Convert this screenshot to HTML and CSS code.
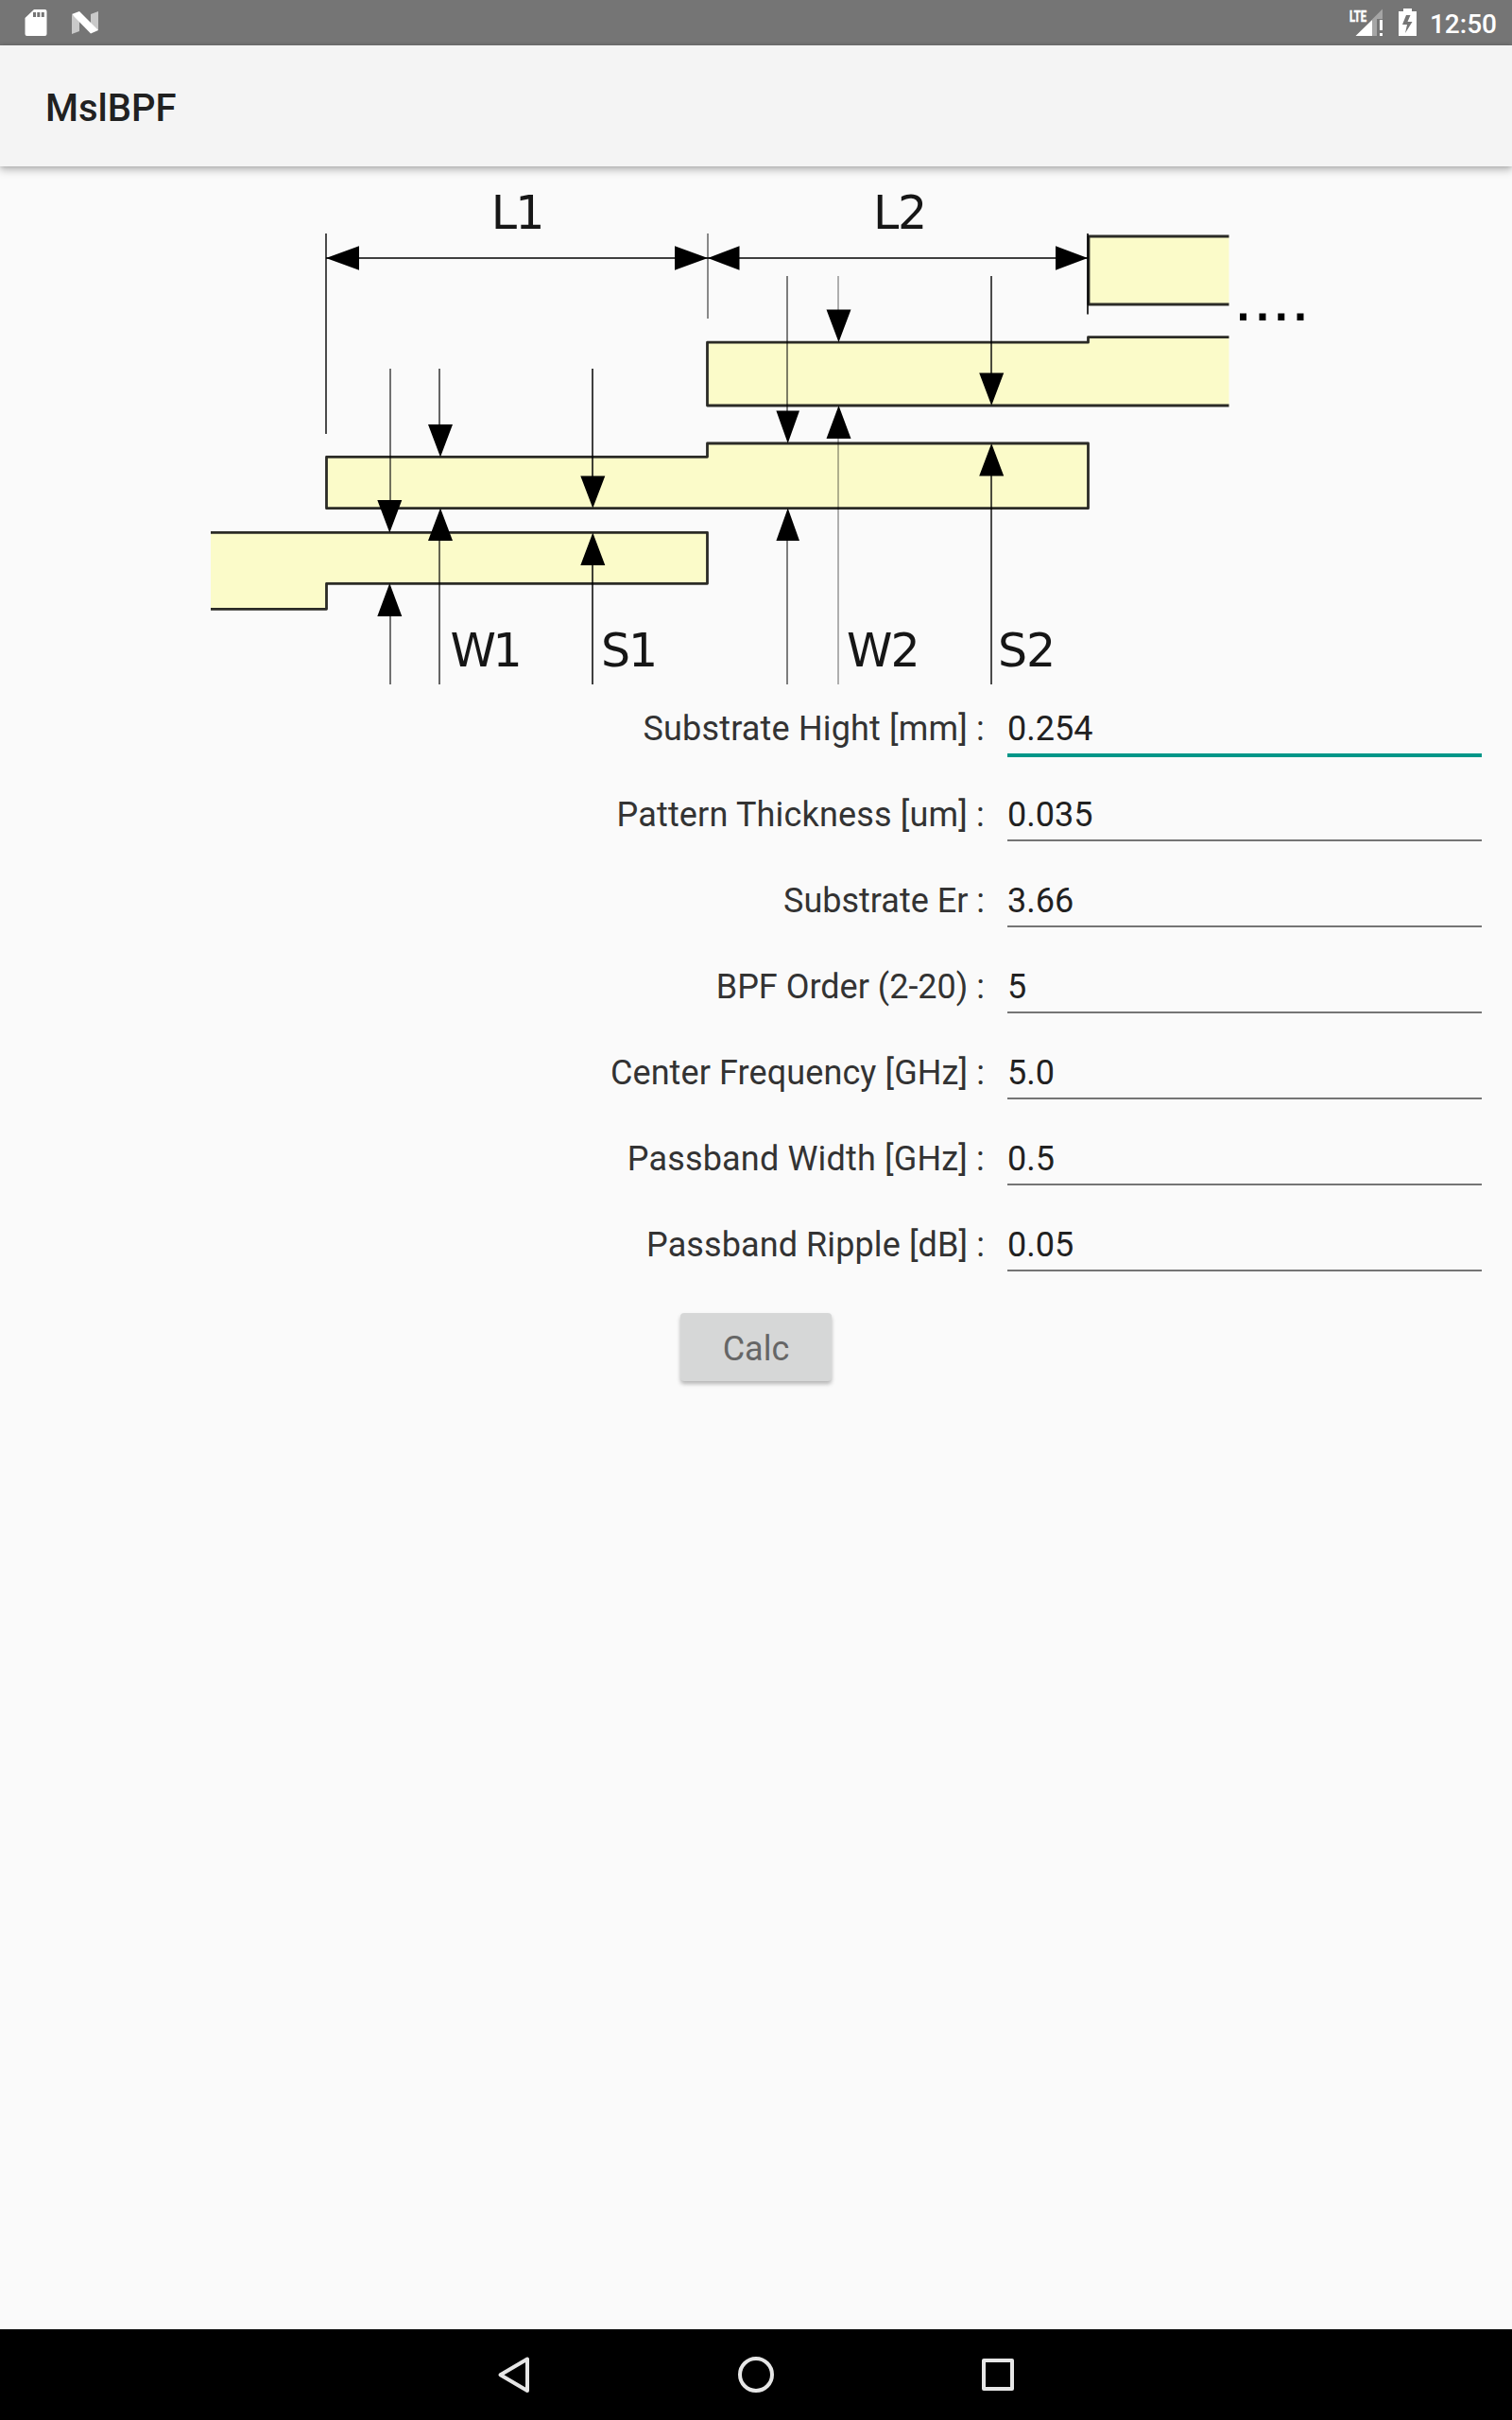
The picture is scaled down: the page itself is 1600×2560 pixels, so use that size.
FILE: index.html
```html
<!DOCTYPE html>
<html lang="en">
<head>
<meta charset="utf-8">
<title>MslBPF</title>
<link rel="stylesheet" href="styles.css">
</head>
<body>
<header class="status">
  <svg class="status-left" width="110" height="48" viewBox="0 0 110 48">
    <path fill="#fff" fill-rule="evenodd" d="M36 10h11.500a2 2 0 0 1 2 2v24a2 2 0 0 1-2 2h-19a2 2 0 0 1-2-2V19zM35 13v5h3v-5zm4.300 0v5h3v-5zm4.500 0v5h3v-5z"/>
    <path fill="#c9c9c9" d="M76 16l8 2v15l-8 3zM96 15l8-3v20l-8-2z"/>
    <path fill="#fff" d="M76 15l8-3 20 20-8 3.500z"/>
  </svg>
  <div class="status-right">
    <svg width="80" height="48" viewBox="1425 0 80 48">
      <text class="lte" x="1428" y="22.500" textLength="18" lengthAdjust="spacingAndGlyphs">LTE</text>
      <path fill="#a5a5a5" d="M1463 9.500V20h-6v18h-5V20.500z"/>
      <path fill="#fff" d="M1452 21v17h-17.500zM1460 21h3v11h-3zM1460 35h3v3h-3z"/>
      <path fill="#fff" fill-rule="evenodd" d="M1485 9h9v3h5v26h-19V12h5zM1488 16l-4 10h5l-2 9 7.500-12h-5l3-7z"/>
    </svg>
    <span class="clock">12:50</span>
  </div>
</header>
<div class="appbar"><h1>MslBPF</h1></div>
<main>
  <svg class="diagram" width="1600" height="548" viewBox="0 176 1600 548">
    <g class="fill">
      <path d="M223 563.300H748.500V617.300H345.500V644.300H223z"/>
      <path d="M345.500 483.300H748.500V469H1151.500V537.700H345.500z"/>
      <path d="M1300.500 356.700H1151.500V362.200H748.500V429H1300.500z"/>
      <path d="M1152 250H1300.500V322H1152z"/>
    </g>
    <g class="edge">
      <path d="M223 563.300H748.500V617.300H345.500V644.300H223"/>
      <path d="M345.500 483.300H748.500V469H1151.500V537.700H345.500z"/>
      <path d="M1300.500 356.700H1151.500V362.200H748.500V429H1300.500"/>
      <path d="M1300.500 250H1152V322H1300.500"/>
    </g>
    <g class="dim">
      <path opacity=".75" d="M345 273H1151"/>
      <path opacity=".7" d="M345 247V459"/>
      <path opacity=".45" d="M749 247V337"/>
      <path opacity=".8" d="M1151 247V332.500"/>
      <path opacity=".55" d="M413 390V530M413 651V724"/>
      <path opacity=".6" d="M465 390V450M465 571V724"/>
      <path opacity=".75" d="M627 390V505M627 597V724"/>
      <path opacity=".5" d="M833 292V435M833 571V724"/>
      <path opacity=".3" d="M887 292V329M887 463V724"/>
      <path opacity=".7" d="M1049 292V395M1049 503V724"/>
    </g>
    <g class="heads">
      <path d="M345 273l35-12.700v25.400zM749 273l-35-12.700v25.400zM749 273l33.500-12.700v25.400zM1151 273l-34-12.700v25.400z"/>
      <path d="M412.300 563.500l-13-34.500h26zM412.300 617l-13 35h26z"/>
      <path d="M466 483.500l-13-34.500h26zM466 537.500l-13 34.500h26z"/>
      <path d="M627.300 537.500l-13-34h26zM627.300 563.500l-13 34.500h26z"/>
      <path d="M833.700 469l-12.300-34.500h24.600zM833.700 537.500l-12.300 34.500h24.600z"/>
      <path d="M887.500 362l-13-34.500h26zM887.500 429l-13 35h26z"/>
      <path d="M1049.200 429l-13-34.500h26zM1049.200 469l-13 34.500h26z"/>
      <path d="M1312 331.500h7v7.500h-7zM1332.500 331.500h7v7.500h-7zM1352.300 331.500h7v7.500h-7zM1372.500 331.500h7v7.500h-7z"/>
    </g>
    <g class="name">
      <text x="519.800 545.300" y="242">L1</text>
      <text x="924 950" y="242">L2</text>
      <text x="476.500 521.500" y="704.500">W1</text>
      <text x="636 665" y="704.500">S1</text>
      <text x="896 942.500" y="704.500">W2</text>
      <text x="1056 1086" y="704.500">S2</text>
    </g>
  </svg>
  <form class="form">
    <label class="row wide"><span>Substrate Hight [mm] :</span><input class="active" value="0.254"></label>
    <label class="row wide"><span>Pattern Thickness [um] :</span><input value="0.035"></label>
    <label class="row"><span>Substrate Er :</span><input value="3.66"></label>
    <label class="row"><span>BPF Order (2-20) :</span><input value="5"></label>
    <label class="row loose"><span>Center Frequency [GHz] :</span><input value="5.0"></label>
    <label class="row wide"><span>Passband Width [GHz] :</span><input value="0.5"></label>
    <label class="row loose"><span>Passband Ripple [dB] :</span><input value="0.05"></label>
    <button class="calc" type="button">Calc</button>
  </form>
</main>
<nav class="nav">
  <svg width="48" height="48" viewBox="520 2488 48 48"><path d="M558 2495.500v33.500L529.500 2512.200z"/></svg>
  <svg width="48" height="48" viewBox="776 2488 48 48"><circle cx="800" cy="2512" r="17"/></svg>
  <svg width="48" height="48" viewBox="1032 2488 48 48"><rect x="1041" y="2497" width="30" height="30"/></svg>
</nav>
</body>
</html>
```
FILE: styles.css
```css
* { box-sizing: border-box; }
body {
  margin: 0;
  width: 1600px;
  height: 2560px;
  display: flex;
  flex-direction: column;
  background: #fafafa;
  font-family: Roboto, sans-serif;
}
svg { display: block; }
.status {
  height: 48px;
  background: #757575;
  display: flex;
  justify-content: space-between;
}
.status-right { display: flex; padding-right: 16px; }
.clock {
  width: 79px;
  text-align: right;
  color: #fff;
  font-size: 28px;
  font-weight: 500;
  line-height: 51px;
}
.lte { fill: #fff; stroke: #fff; stroke-width: .6; font-size: 17px; font-weight: 700; }
.appbar {
  height: 128px;
  background: #f4f4f4;
  padding-left: 48px;
  box-shadow: 0 4px 8px rgba(0, 0, 0, .26), 0 0 4px rgba(0, 0, 0, .15);
  z-index: 1;
}
h1 {
  margin: 0;
  font-size: 40px;
  font-weight: 500;
  line-height: 134px;
  color: #212121;
}
main { flex: 1; }
.fill { fill: #fbfbc9; }
.edge { fill: none; stroke: #2b2b26; stroke-width: 2.8; stroke-linejoin: round; }
.dim { fill: none; stroke: #000; stroke-width: 2; }
.name { font-family: "DejaVu Sans", sans-serif; font-size: 49px; fill: #161616; }
.form { display: flex; flex-direction: column; }
.row {
  height: 91px;
  display: grid;
  grid-template-columns: 1042px 502px;
  column-gap: 24px;
  align-items: start;
  font-size: 36px;
  color: #333;
}
.row span { text-align: right; line-height: 42px; padding-top: 26px; }
.wide span { letter-spacing: .17px; }
.loose span { letter-spacing: .1px; }
.row input {
  height: 75px;
  border: 0;
  border-bottom: 2px solid #757575;
  border-radius: 0;
  background: none;
  outline: 0;
  padding: 26px 0 5px;
  font: 36px/42px Roboto, sans-serif;
  color: #212121;
}
.row .active { height: 77px; border-bottom: 4px solid #009688; }
.calc {
  align-self: center;
  width: 160px;
  height: 72px;
  margin-top: 28px;
  padding: 4px 0 0;
  border: 0;
  border-radius: 4px;
  background: #d6d7d7;
  color: #666;
  font: 36px/42px Roboto, sans-serif;
  box-shadow: 0 3px 4px rgba(0, 0, 0, .28);
}
.nav {
  height: 96px;
  background: #000;
  display: flex;
  justify-content: center;
  align-items: center;
  gap: 208px;
}
.nav svg { fill: none; stroke: #e6e6e6; stroke-width: 4; stroke-linejoin: round; }
```
